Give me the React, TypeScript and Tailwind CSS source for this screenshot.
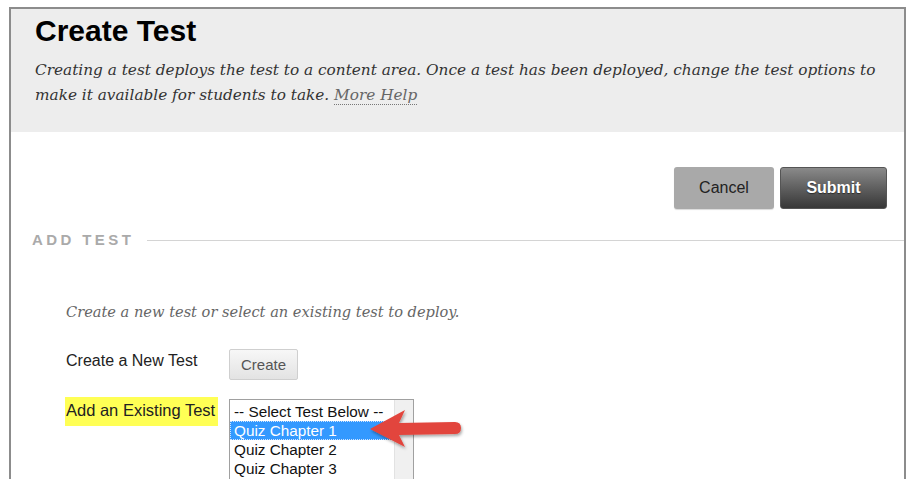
import React from "react";

const serif = "font-['DejaVu_Serif',Georgia,serif]";
const sans = "font-['Liberation_Sans',Arial,sans-serif]";

function ArrowPointer() {
	return (
		<svg
			className="absolute left-[366px] top-[406px]"
			width="102"
			height="48"
			viewBox="0 0 102 48"
		>
			<defs>
				<filter id="shade" x="-20%" y="-30%" width="140%" height="170%">
					<feDropShadow dx="1" dy="2" stdDeviation="1.5" floodColor="#000" floodOpacity="0.35" />
				</filter>
			</defs>
			<path
				filter="url(#shade)"
				fill="#e2453c"
				d="M4 23 L39 4 L33 17 L89 16 Q95 16 95 22 Q95 28 89 28 L33 29 L39 41 Z"
			/>
		</svg>
	);
}

function ListBox() {
	const items = ["Quiz Chapter 2", "Quiz Chapter 3"];
	return (
		<div className="w-[185px] h-[90px] mt-[2px] border border-[#a0a0a0] flex bg-white overflow-hidden">
			<div className={`flex-1 pt-[2px] text-[15.3px] leading-[19px] text-[#111] ${sans}`}>
				<div className="pl-[4px]">-- Select Test Below --</div>
				<div className="pl-[4px] bg-[#3399ff] text-white outline-1 outline-dotted outline-[#cfe4ff] -outline-offset-1">
					Quiz Chapter 1
				</div>
				{items.map((t) => (
					<div key={t} className="pl-[4px]">
						{t}
					</div>
				))}
			</div>
			<div className="w-[19px] bg-[#f0f0f0] border-l border-[#e2e2e2]" />
		</div>
	);
}

export default function App() {
	return (
		<div className="relative w-[908px] h-[479px] overflow-hidden bg-white pl-[9px] pt-[7px]">
			<div className="w-[897px] h-[480px] border-2 border-b-0 border-[#8c8c8c]">
				{/* page header */}
				<div className="bg-[#ededed] h-[123px] pl-[24px] pt-[6px]">
					<h1 className={`text-[30px] leading-[32px] font-bold text-black ${sans}`}>Create Test</h1>
					<p className={`mt-[11px] italic text-[15.3px] leading-[25px] text-[#333] ${serif}`}>
						Creating a test deploys the test to a content area. Once a test has been deployed, change the test options to
						<br />
						make it available for students to take.{" "}
						<span className="text-[#666] border-b border-dotted border-[#777]">More Help</span>
					</p>
				</div>

				{/* actions */}
				<div className={`flex justify-end gap-[6px] pr-[17px] mt-[35px] ${sans}`}>
					<button className="w-[100px] h-[42px] rounded-[3px] bg-[#a9a9a9] text-[16px] text-[#222] shadow-[0_1px_1px_rgba(0,0,0,0.15)]">
						Cancel
					</button>
					<button className="w-[107px] h-[42px] rounded-[3px] bg-gradient-to-b from-[#8a8a8a] to-[#383838] border border-[#555] text-[16px] font-bold text-white [text-shadow:0_1px_1px_rgba(0,0,0,0.5)]">
						Submit
					</button>
				</div>

				{/* section heading */}
				<div className="flex items-center mt-[20px] pl-[21px]">
					<span className={`text-[15px] font-bold tracking-[3.4px] text-[#aaa] ${sans}`}>ADD TEST</span>
					<div className="flex-1 h-px bg-[#d4d4d4] ml-[13px]" />
				</div>

				<div className="pl-[55px]">
					<p className={`mt-[49px] italic text-[14.6px] text-[#666] ${serif}`}>
						Create a new test or select an existing test to deploy.
					</p>

					<div className={`flex items-start mt-[26px] text-[16px] text-[#222] ${sans}`}>
						<div className="w-[163px] pt-[1px]">Create a New Test</div>
						<button className="h-[31px] px-[11px] mt-[1px] rounded-[2px] border border-[#cfcfcf] bg-gradient-to-b from-[#f7f7f7] to-[#e3e3e3] text-[15px] text-[#555]">
							Create
						</button>
					</div>

					<div className={`flex items-start mt-[17px] text-[16px] text-[#222] ${sans}`}>
						<div className="w-[164px] -ml-[1px]">
							<span className="bg-[#ffff55] pl-[1px] pr-[3px] pt-[1px] pb-[3px] inline-block text-[16.5px]">
								Add an Existing Test
							</span>
						</div>
						<ListBox />
					</div>
				</div>
			</div>
			<ArrowPointer />
		</div>
	);
}
